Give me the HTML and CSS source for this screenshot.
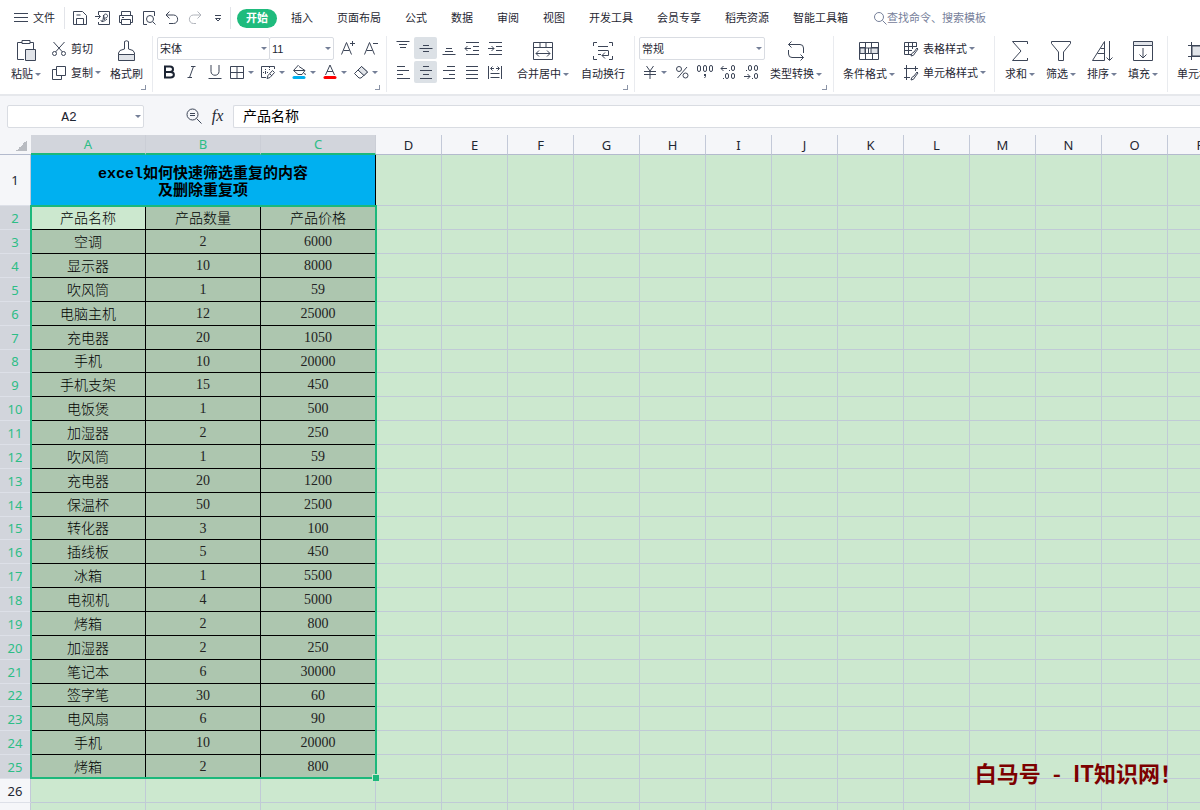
FILE: index.html
```html
<!DOCTYPE html>
<html lang="zh-CN">
<head>
<meta charset="utf-8">
<title>产品表</title>
<link rel="stylesheet" href="styles.css">
</head>
<body>
<header class="tabs">
  <button class="file"><svg class="i14" viewBox="0 0 14 14"><path d="M0 2.500h14M0 6.500h14M0 10.500h14"/></svg>文件</button>
  <div class="quick">
    <button aria-label="保存"><svg class="i16" viewBox="0 0 16 16"><path d="M1.500 14.500v-13h9l4 4v9zM4.500 14v-5.500h7V14M4.500 5h4"/></svg></button>
    <button aria-label="输出为PDF"><svg class="i16" viewBox="0 0 16 16"><path d="M3.500 4V1.500h11v13h-11V12M0 6.500h5M3 4l2.500 2.500L3 9M7 12c1-1 1.500-4 1.500-7M8.500 8c5 1 5-4 2-4-2 0-2 3-1 6M6 10c0 3 4 1 6-1"/></svg></button>
    <button aria-label="打印"><svg class="i16" viewBox="0 0 16 16"><path d="M3.500 5V1.500h9V5M3.500 12.500h-2v-7h13v7h-2M3.500 9.500h9v5h-9zM4 7.500h2"/></svg></button>
    <button aria-label="打印预览"><svg class="i16" viewBox="0 0 16 16"><path d="M6 14.500H2.500v-13h11V6M12 12l2.500 2.500"/><circle cx="9" cy="9" r="3.500"/></svg></button>
    <button aria-label="撤销"><svg class="i16" viewBox="0 0 16 16"><path d="M5.500 1.500L2 5l3.500 3.500M2 5h7.500c5.500 0 5.500 8.500 0 8.500H5"/></svg></button>
    <button aria-label="恢复" disabled><svg class="i16" viewBox="0 0 16 16"><path d="M10.500 1.500L14 5l-3.500 3.500M14 5H6.500C1 5 1 13.500 6.500 13.500H9"/></svg></button>
    <button aria-label="自定义"><svg class="i16" viewBox="0 0 16 16"><path d="M5 5.500h6M5.500 8.500h5L8 11z"/></svg></button>
  </div>
  <nav class="menu">
    <button class="current">开始</button><button>插入</button><button>页面布局</button><button>公式</button><button>数据</button><button>审阅</button><button>视图</button><button>开发工具</button><button>会员专享</button><button>稻壳资源</button><button>智能工具箱</button>
  </nav>
  <label class="search"><svg class="i14" viewBox="0 0 14 14"><circle cx="6" cy="6" r="4.500"/><path d="M9.500 9.500l4 4"/></svg><input type="text" placeholder="查找命令、搜索模板" aria-label="查找命令"></label>
</header>

<section class="ribbon">
  <div class="group clipboard">
    <button class="big"><svg class="i24" viewBox="0 0 24 24"><path d="M8 3.500H3.500v17H10M16 3.500h3.500V10M8 1.500h8v3H8z"/><path class="shade" d="M11.500 10.500h10v11h-10z"/></svg><span class="drop">粘贴</span></button>
    <div class="rows">
      <button class="line"><svg class="i16" viewBox="0 0 16 16"><path d="M2.500 1l9 10M13.500 1l-9 10"/><circle cx="3.500" cy="12.500" r="2"/><circle cx="12.500" cy="12.500" r="2"/></svg>剪切</button>
      <button class="line"><svg class="i16" viewBox="0 0 16 16"><path d="M5.500 1.500h9v9h-9zM5 4.500H1.500v10h9V11"/></svg><span class="drop">复制</span></button>
    </div>
    <button class="big"><svg class="i24" viewBox="0 0 24 24"><path d="M9.500 10V2.500q2-1.500 4 0V10q6 1 6 4v1.500H3.500V14q0-3 6-4z"/><path class="shade" d="M3.500 15.500h16v6h-16z"/></svg><span>格式刷</span></button>
    <i class="launcher"></i>
  </div>

  <div class="group font">
    <div class="rows">
      <div class="row boxes">
        <span class="pick font-name"><select aria-label="字体"><option>宋体</option></select></span>
        <span class="pick font-size"><select aria-label="字号"><option>11</option></select></span>
        <button class="tool grow" aria-label="增大字号"><svg class="i16" viewBox="0 0 16 16"><path d="M1.500 14.500l5-12 5 12M3.500 10.500h6M10 3.500h5M12.500 1v5"/></svg></button>
        <button class="tool" aria-label="减小字号"><svg class="i16" viewBox="0 0 16 16"><path d="M1.500 14.500l5-12 5 12M3.500 10.500h6M10 3.500h5"/></svg></button>
      </div>
      <div class="row">
        <button class="tool" aria-label="加粗"><svg class="i16 heavy" viewBox="0 0 16 16"><path d="M4 2.500h5c4 0 4 5.500 0 5.500H4zM4 8h5.500c4.500 0 4.500 5.500 0 5.500H4z"/></svg></button>
        <button class="tool" aria-label="倾斜"><svg class="i16" viewBox="0 0 16 16"><path d="M7 2.500h4.500M9.500 2.500l-4 11M3.500 13.500H8"/></svg></button>
        <button class="tool" aria-label="下划线"><svg class="i16" viewBox="0 0 16 16"><path d="M4 1v6.500c0 5 8 5 8 0V1M1.500 14.500h13"/></svg></button>
        <button class="split" aria-label="边框"><svg class="i16" viewBox="0 0 16 16"><path d="M1.500 2.500h13v12h-13zM8 2.500v12M1.500 8.500h13"/></svg></button>
        <button class="split" aria-label="绘制边框"><svg class="i16" viewBox="0 0 16 16"><path d="M14.500 5V2.500h-13v11H6"/><path stroke-dasharray="1 1" d="M5.500 5v6M3 8.500h6M9.500 3v3"/><path d="M7 14.500l1-3 4.500-5 2 2-4.500 5zM10 10l2 2"/></svg></button>
        <button class="split" aria-label="填充颜色"><svg class="i16" viewBox="0 0 16 16"><path d="M7.500 1L2.500 6.500l4.500 4h4l3-4-6-4M3 6.500h11M13.500 9l1 2"/><path class="blue" d="M3 13.500h10"/></svg></button>
        <button class="split" aria-label="字体颜色"><svg class="i16" viewBox="0 0 16 16"><path d="M3.500 11L8 1l4.500 10M5 7.500h6"/><path class="red" d="M3 13.500h10"/></svg></button>
        <button class="split" aria-label="清除"><svg class="i16" viewBox="0 0 16 16"><path d="M1.500 9.500l7-7 6 5.500-6.500 6H6zM5 6l6.500 5.500"/><path class="shade" d="M5 6l3.500-3.500 6 5.500-3.500 3.500z"/></svg></button>
      </div>
    </div>
    <i class="launcher"></i>
  </div>

  <div class="group align">
    <div class="rows">
      <div class="row">
        <button class="tool" aria-label="顶端对齐"><svg class="i16" viewBox="0 0 16 16"><path d="M1.500 1.500h13M4 4.500h8M5 7.500h6"/></svg></button>
        <button class="tool on" aria-label="垂直居中"><svg class="i16" viewBox="0 0 16 16"><path d="M5 5.500h6M1.500 8.500h13M5 11.500h6"/></svg></button>
        <button class="tool" aria-label="底端对齐"><svg class="i16" viewBox="0 0 16 16"><path d="M5 8.500h6M4 11.500h8M1.500 14.500h13"/></svg></button>
        <button class="tool" aria-label="减少缩进"><svg class="i16" viewBox="0 0 16 16"><path d="M2 2.500h13M9 6.500h6M9 10.500h6M2 14.500h13M1 8.500h6M3.500 6L1 8.500 3.500 11"/></svg></button>
        <button class="tool" aria-label="增加缩进"><svg class="i16" viewBox="0 0 16 16"><path d="M2 2.500h13M9 6.500h6M9 10.500h6M2 14.500h13M1 8.500h6M4.500 6L7 8.500 4.500 11"/></svg></button>
      </div>
      <div class="row">
        <button class="tool" aria-label="左对齐"><svg class="i16" viewBox="0 0 16 16"><path d="M2 2.500h8M2 6.500h12M2 10.500h6M2 14.500h13"/></svg></button>
        <button class="tool on" aria-label="水平居中"><svg class="i16" viewBox="0 0 16 16"><path d="M5 2.500h6M2 6.500h12M5 10.500h6M2 14.500h12"/></svg></button>
        <button class="tool" aria-label="右对齐"><svg class="i16" viewBox="0 0 16 16"><path d="M6 2.500h8M2 6.500h12M8 10.500h6M2 14.500h12"/></svg></button>
        <button class="tool" aria-label="两端对齐"><svg class="i16" viewBox="0 0 16 16"><path d="M2 2.500h12M2 6.500h12M2 10.500h12M2 14.500h12"/></svg></button>
        <button class="tool" aria-label="分散对齐"><svg class="i16" viewBox="0 0 16 16"><path d="M1.500 2v13M14.500 2v13M3.500 9.500h9M3.500 13.500h9M4 4.500h3M9 4.500h3M5.500 2.500l-2 2 2 2M10.500 2.500l2 2-2 2"/></svg></button>
      </div>
    </div>
    <button class="big"><svg class="i24" viewBox="0 0 24 24"><path d="M2.500 3.500h19v17h-19zM2.500 8.500h19M9 3.500v5M15 3.500v5M5 14.500h14M8 11.500l-3 3 3 3M16 11.500l3 3-3 3"/></svg><span class="drop">合并居中</span></button>
    <button class="big"><svg class="i24" viewBox="0 0 24 24"><path d="M2.500 7V3.500H6M18 3.500h3.500V7M2.500 17v3.500H6M18 20.500h3.500V17M7 7.500h10M7 11.500h10M7 15.500h3M17.500 11.500v5H11M14 13.500l-3 3 3 3"/></svg><span>自动换行</span></button>
    <i class="launcher"></i>
  </div>

  <div class="group number">
    <div class="rows">
      <div class="row boxes"><span class="pick format"><select aria-label="数字格式"><option>常规</option></select></span></div>
      <div class="row">
        <button class="split money" aria-label="货币"><svg class="i16" viewBox="0 0 16 16"><path d="M4.500 2L8 7l3.500-5M2 7.500h12M2 10.500h12M8 7v8"/></svg></button>
        <button class="tool" aria-label="百分比"><svg class="i16" viewBox="0 0 16 16"><circle cx="5" cy="5" r="2.500"/><circle cx="11.500" cy="11.500" r="2.500"/><path d="M13 3L3.500 14"/></svg></button>
        <button class="tool" aria-label="千位分隔"><svg class="i16" viewBox="0 0 16 16"><rect x=".5" y="1.500" width="3" height="6" rx="1.500"/><rect x="6.500" y="1.500" width="3" height="6" rx="1.500"/><rect x="12.500" y="1.500" width="3" height="6" rx="1.500"/><path d="M8.500 10v2.500L7.500 14M7.500 10v2"/></svg></button>
        <button class="tool" aria-label="增加小数位"><svg class="i16" viewBox="0 0 16 16"><path d="M1 4.500h6M3.500 2L1 4.500 3.500 7M9 6.500h1M3 14.500h1"/><rect x="11.500" y="1.500" width="3" height="5" rx="1.500"/><rect x="5.500" y="9.500" width="3" height="5" rx="1.500"/><rect x="11.500" y="9.500" width="3" height="5" rx="1.500"/></svg></button>
        <button class="tool" aria-label="减少小数位"><svg class="i16" viewBox="0 0 16 16"><path d="M1 12.500h6M4.500 10L7 12.500 4.500 15M9 14.500h1M3 6.500h1"/><rect x="5.500" y="1.500" width="3" height="5" rx="1.500"/><rect x="11.500" y="1.500" width="3" height="5" rx="1.500"/><rect x="11.500" y="9.500" width="3" height="5" rx="1.500"/></svg></button>
      </div>
    </div>
    <button class="big"><svg class="i24" viewBox="0 0 24 24"><path d="M7.500 2.500l-3 3 3 3M4.500 5.500H16q3.500 0 3.500 3.500v5M4.500 11v4q0 3.500 3.500 3.500h11.500M16.500 15.500l3 3-3 3"/></svg><span class="drop">类型转换</span></button>
    <i class="launcher"></i>
  </div>

  <div class="group styles">
    <button class="big"><svg class="i24" viewBox="0 0 24 24"><path class="shade" d="M3 8.500h5v6H3zM14 8.500h7v6h-7z"/><path d="M2.500 3.500h19v17h-19zM2.500 9h19M2.500 14.500h19M8.500 3.500v17M14.500 3.500v5.500M11.500 9v5.500M15.500 14.500v6"/></svg><span class="drop">条件格式</span></button>
    <div class="rows">
      <button class="line"><svg class="i16" viewBox="0 0 16 16"><path d="M8 13.500H1.500v-12h12V6M1.500 5.500h12M1.500 9.500H9M5.500 1.500v12M9.500 1.500V8M8 15q0-3 3-4l3-4 1 1-3 4q-1 3-4 3z"/></svg><span class="drop">表格样式</span></button>
      <button class="line"><svg class="i16" viewBox="0 0 16 16"><path d="M3.500 0v15M1 3.500h14M1 12.500h6M12.500 1v5M8 15q0-3 3-4l3-4 1 1-3 4q-1 3-4 3z"/></svg><span class="drop">单元格样式</span></button>
    </div>
  </div>

  <div class="group editing">
    <button class="big"><svg class="i24" viewBox="0 0 24 24"><path d="M19.500 5V2.500h-15L13 12l-8.500 9.500h15V19"/></svg><span class="drop">求和</span></button>
    <button class="big"><svg class="i24" viewBox="0 0 24 24"><path d="M2.500 2.500h19v2L14.500 13v8.500h-5V13l-7-8.500z"/></svg><span class="drop">筛选</span></button>
    <button class="big"><svg class="i24" viewBox="0 0 24 24"><path d="M2.500 21.500l12-19v19zM7.500 14.500h7M10.500 9.500h4M19.500 2v19M16.500 18.500l3 3 3-3"/></svg><span class="drop">排序</span></button>
    <button class="big"><svg class="i24" viewBox="0 0 24 24"><path class="shade" d="M2.500 2.500h19v4h-19z"/><path d="M2.500 6.500v15h19v-15M12 9v10M8.500 15.500L12 19l3.500-3.500"/></svg><span class="drop">填充</span></button>
  </div>

  <div class="group cells">
    <button class="big"><svg class="i24" viewBox="0 0 24 24"><path class="shade" d="M6 7h13v10H6z"/><path d="M5.500 3v18M18.500 3v18M2 6.500h20M2 17.500h20"/></svg><span class="drop">单元格</span></button>
  </div>
</section>

<section class="formula">
  <span class="pick name-box"><input type="text" value="A2" aria-label="名称框"></span>
  <button class="lens" aria-label="浏览公式结果"><svg class="i16" viewBox="0 0 16 16"><circle cx="6.500" cy="6.500" r="5.500"/><path d="M10.500 10.500l5 5M4 5.500h5M4 7.500h5"/></svg></button>
  <button class="fx" aria-label="插入函数">fx</button>
  <input class="content" type="text" value="产品名称" aria-label="编辑栏">
</section>

<main class="sheet">
  <table>
    <colgroup><col class="c-num"><col class="c-a" span="3"><col class="c-std" span="13"></colgroup>
    <thead><tr><th class="corner"></th><th class="sel">A</th><th class="sel">B</th><th class="sel">C</th><th>D</th><th>E</th><th>F</th><th>G</th><th>H</th><th>I</th><th>J</th><th>K</th><th>L</th><th>M</th><th>N</th><th>O</th><th>P</th></tr></thead>
    <tbody>
      <tr class="first"><th>1</th><td class="title" colspan="3">excel如何快速筛选重复的内容<br>及删除重复项</td><td class="rest" colspan="13"></td></tr>
    </tbody>
    <tbody class="data">
      <tr><th>2</th><td class="active">产品名称</td><td>产品数量</td><td>产品价格</td><td class="rest" colspan="13"></td></tr>
      <tr><th>3</th><td>空调</td><td class="n">2</td><td class="n">6000</td><td class="rest" colspan="13"></td></tr>
      <tr><th>4</th><td>显示器</td><td class="n">10</td><td class="n">8000</td><td class="rest" colspan="13"></td></tr>
      <tr><th>5</th><td>吹风筒</td><td class="n">1</td><td class="n">59</td><td class="rest" colspan="13"></td></tr>
      <tr><th>6</th><td>电脑主机</td><td class="n">12</td><td class="n">25000</td><td class="rest" colspan="13"></td></tr>
      <tr><th>7</th><td>充电器</td><td class="n">20</td><td class="n">1050</td><td class="rest" colspan="13"></td></tr>
      <tr><th>8</th><td>手机</td><td class="n">10</td><td class="n">20000</td><td class="rest" colspan="13"></td></tr>
      <tr><th>9</th><td>手机支架</td><td class="n">15</td><td class="n">450</td><td class="rest" colspan="13"></td></tr>
      <tr><th>10</th><td>电饭煲</td><td class="n">1</td><td class="n">500</td><td class="rest" colspan="13"></td></tr>
      <tr><th>11</th><td>加湿器</td><td class="n">2</td><td class="n">250</td><td class="rest" colspan="13"></td></tr>
      <tr><th>12</th><td>吹风筒</td><td class="n">1</td><td class="n">59</td><td class="rest" colspan="13"></td></tr>
      <tr><th>13</th><td>充电器</td><td class="n">20</td><td class="n">1200</td><td class="rest" colspan="13"></td></tr>
      <tr><th>14</th><td>保温杯</td><td class="n">50</td><td class="n">2500</td><td class="rest" colspan="13"></td></tr>
      <tr><th>15</th><td>转化器</td><td class="n">3</td><td class="n">100</td><td class="rest" colspan="13"></td></tr>
      <tr><th>16</th><td>插线板</td><td class="n">5</td><td class="n">450</td><td class="rest" colspan="13"></td></tr>
      <tr><th>17</th><td>冰箱</td><td class="n">1</td><td class="n">5500</td><td class="rest" colspan="13"></td></tr>
      <tr><th>18</th><td>电视机</td><td class="n">4</td><td class="n">5000</td><td class="rest" colspan="13"></td></tr>
      <tr><th>19</th><td>烤箱</td><td class="n">2</td><td class="n">800</td><td class="rest" colspan="13"></td></tr>
      <tr><th>20</th><td>加湿器</td><td class="n">2</td><td class="n">250</td><td class="rest" colspan="13"></td></tr>
      <tr><th>21</th><td>笔记本</td><td class="n">6</td><td class="n">30000</td><td class="rest" colspan="13"></td></tr>
      <tr><th>22</th><td>签字笔</td><td class="n">30</td><td class="n">60</td><td class="rest" colspan="13"></td></tr>
      <tr><th>23</th><td>电风扇</td><td class="n">6</td><td class="n">90</td><td class="rest" colspan="13"></td></tr>
      <tr><th>24</th><td>手机</td><td class="n">10</td><td class="n">20000</td><td class="rest" colspan="13"></td></tr>
      <tr><th>25</th><td>烤箱</td><td class="n">2</td><td class="n">800</td><td class="rest" colspan="13"></td></tr>
    </tbody>
    <tbody>
      <tr><th>26</th><td></td><td></td><td></td><td class="rest" colspan="13"></td></tr>
      <tr><th>27</th><td></td><td></td><td></td><td class="rest" colspan="13"></td></tr>
    </tbody>
  </table>
  <div class="selection"></div>
  <p class="watermark"><span>白马号</span><span>-</span><span>IT知识网！</span></p>
</main>
</body>
</html>
```
FILE: styles.css
```css
* { box-sizing: border-box; }

body {
  margin: 0;
  height: 100vh;
  display: flex;
  flex-direction: column;
  overflow: hidden;
  background: #f5f6f9;
  color: #1f2733;
  font: 11px/16px "Liberation Sans", "Noto Sans CJK SC", sans-serif;
}

button, input, select {
  margin: 0;
  padding: 0;
  border: 0;
  background: none;
  color: inherit;
  font: inherit;
  white-space: nowrap;
}

select { appearance: none; }

svg {
  display: block;
  flex: none;
  fill: none;
  stroke: #3c4557;
  stroke-width: 1;
}
.i14 { width: 14px; height: 14px; }
.i16 { width: 16px; height: 16px; }
.i24 { width: 24px; height: 24px; }
.heavy { stroke: #1c2433; stroke-width: 2; }
.shade { fill: #e1e4e9; }
.blue { stroke: #00b0f0; stroke-width: 3; stroke-linecap: round; }
.red { stroke: #f00; stroke-width: 3; stroke-linecap: round; }

/* Tab strip */
.tabs {
  display: flex;
  align-items: center;
  height: 36px;
  flex: none;
  background: #fff;
}
.file {
  display: flex;
  align-items: center;
  gap: 5px;
  padding: 0 9px 0 14px;
}
.quick {
  display: flex;
  height: 22px;
  align-items: center;
  padding: 0 1px 0 3px;
  border: solid #e2e4e9;
  border-width: 0 1px;
}
.quick button {
  width: 23px;
  display: flex;
  justify-content: center;
}
.quick button:disabled { opacity: .4; }
.menu {
  display: flex;
  align-items: center;
  gap: 24px;
  margin-left: 6px;
}
.menu .current {
  width: 40px;
  height: 19px;
  margin-right: -10px;
  border-radius: 10px;
  background: #1fbb7d;
  color: #fff;
  font-weight: bold;
}
.search {
  display: flex;
  align-items: center;
  margin-left: 25px;
  color: #76809a;
}
.search svg { stroke: #76809a; }
.search input { width: 110px; }
.search input::placeholder { color: #76809a; opacity: 1; }

/* Ribbon */
.ribbon {
  display: flex;
  flex: none;
  height: 60px;
  padding-bottom: 2px;
  background: #fff;
  border-bottom: 2px solid #e6e8ec;
}
.group {
  position: relative;
  display: flex;
  flex: none;
  border-right: 1px solid #e9ebef;
}
.rows { display: flex; flex-direction: column; gap: 1px; padding-top: 1px; }
.row { display: flex; height: 23px; }
.big {
  display: flex;
  flex-direction: column;
  align-items: center;
  height: 46px;
  padding-top: 3px;
  gap: 3px;
}
.line {
  display: flex;
  align-items: center;
  height: 23px;
  gap: 4px;
}
.drop, .split { display: flex; align-items: center; }
.drop::after, .split::after, .pick::after {
  content: "";
  border: solid transparent;
  border-width: 3px 3px 0;
  border-top-color: #747f97;
  margin-left: 3px;
}
.drop::after { margin-left: 2px; }
.tool {
  display: flex;
  width: 23px;
  height: 22px;
  align-items: center;
  justify-content: center;
}
.on { background: #dce1e6; border-radius: 2px; }
.split { width: 31px; height: 22px; padding-left: 3px; }
.pick {
  position: relative;
  display: flex;
  height: 23px;
  border: 1px solid #d9dce2;
  border-radius: 2px;
  background: #fff;
}
.pick::after { position: absolute; right: 2px; top: 9px; }
.pick select, .pick input { width: 100%; padding-left: 2px; }
.launcher {
  position: absolute;
  right: 6px;
  bottom: 2px;
  width: 5px;
  height: 5px;
  border: solid #8a93a6;
  border-width: 0 1px 1px 0;
}

.clipboard { width: 153px; padding-left: 11px; }
.clipboard .rows { width: 59px; margin-left: 10px; }
.font { width: 234px; padding-left: 4px; }
.font-name { width: 113px; margin-right: -1px; }
.font-size { width: 65px; }
.grow { margin-left: 2px; }
.align { width: 248px; padding-left: 4px; }
.align .rows { margin-right: 11px; }
.align .big { margin-right: 12px; }
.number { width: 199px; padding-left: 4px; }
.number .rows { margin-right: 5px; }
.format { width: 126px; }
.styles { width: 161px; padding-left: 9px; gap: 8px; }
.editing { width: 173px; padding-left: 10px; gap: 11px; }
.cells { padding-left: 9px; border: 0; }

/* Formula bar */
.formula {
  display: flex;
  align-items: center;
  flex: none;
  height: 39px;
  padding: 1px 0 0 7px;
}
.name-box { width: 137px; }
.name-box input {
  padding: 2px 13px 0 0;
  text-align: center;
  font: 13px "Liberation Mono", monospace;
}
.lens { margin-left: 42px; }
.fx {
  width: 31px;
  font: italic 16px/20px "Liberation Serif", serif;
}
.content {
  flex: 1;
  height: 23px;
  padding: 0 0 3px 9px;
  border: 1px solid #d9dce2;
  border-right: 0;
  border-radius: 2px 0 0 2px;
  background: #fff;
  color: #000;
  font-size: 14px;
}

/* Worksheet */
.sheet {
  position: relative;
  flex: 1;
  min-height: 0;
  overflow: hidden;
}
table {
  width: 1234px;
  table-layout: fixed;
  border-collapse: separate;
  border-spacing: 0;
}
.c-num { width: 31px; }
.c-a { width: 115px; }
.c-std { width: 66px; }
th, td { padding: 0; overflow: hidden; }
th {
  background: #f5f6f9;
  font: 13px/18px "Noto Sans", "Open Sans", sans-serif;
}
thead th {
  height: 20px;
  border-right: 1px solid #c3c9d8;
  border-bottom: 1px solid #b3bacd;
}
thead .sel {
  background: #d2d5dc;
  border-right-color: #cbced6;
  border-bottom: 2px solid #1cb87b;
  color: #2dbd86;
}
.corner {
  background: linear-gradient(135deg, transparent 50%, #b9bcc2 50%) 16px 5px / 11px 11px no-repeat #f5f6f9;
  border-right: 0;
}
tbody th {
  border-right: 1px solid #c3c9d8;
  border-bottom: 1px solid #dde0e8;
}
td {
  height: 24px;
  border: solid #c0cad6;
  border-width: 0 1px 1px 0;
  background: #cce8cf;
  color: #000;
  text-align: center;
  font-size: 14px;
  font-weight: 300;
  line-height: 20px;
}
.first td { height: 51px; }
td.title {
  padding-top: 5px;
  border-right-color: #000;
  background: #00b0f0;
  font: bold 15px/17px "Liberation Mono", "Noto Sans CJK SC", monospace;
}
.rest {
  border-right: 0;
  background: repeating-linear-gradient(to right, transparent 0 65px, #c0cad6 65px 66px) #cce8cf;
}
.data th { background: #d2d5dc; color: #2dbd86; }
.data td:not(.rest) { border-color: #000; background: #adc6af; }
.data td.active { background: #cce8cf; }
.data .n {
  padding-top: 1px;
  color: #222;
  font: 14px/20px "Liberation Serif", serif;
}
.data tr:nth-child(7n) td { height: 23px; }

.selection {
  position: absolute;
  left: 30px;
  top: 70px;
  width: 347px;
  height: 574px;
  border: 2px solid #1cb87b;
}
.selection::after {
  content: "";
  position: absolute;
  right: -4px;
  bottom: -4px;
  width: 6px;
  height: 6px;
  border: solid #cce8cf;
  border-width: 1px 0 0 1px;
  background: #1cb87b;
}
.watermark {
  position: absolute;
  right: 18px;
  bottom: 26px;
  margin: 0;
  display: flex;
  gap: 12px;
  color: #7d0000;
  font: bold 22px/24px "Noto Sans CJK SC", sans-serif;
}
```
